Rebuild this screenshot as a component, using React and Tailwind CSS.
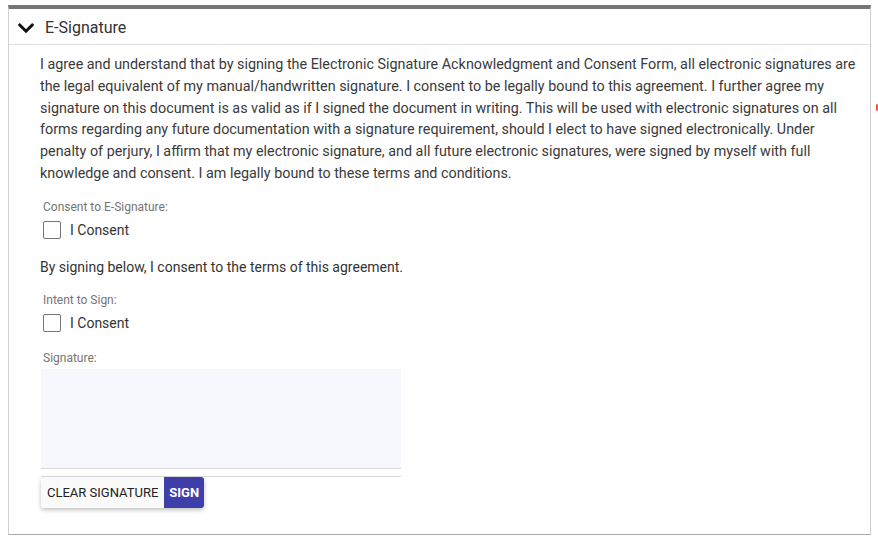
import React from "react";

function Check() {
  return (
    <label className="flex items-center gap-[9px] h-[18px]">
      <span className="w-[18px] h-[18px] border border-[#757575] rounded-[2px] bg-white shrink-0" />
      <span className="text-[14px] text-[#333] leading-[16px]">I Consent</span>
    </label>
  );
}

export default function App() {
  return (
    <div
      className="relative w-[878px] h-[545px] bg-white pl-[8px] pt-[5px] overflow-hidden"
      style={{ fontFamily: "Roboto, 'Liberation Sans', sans-serif" }}
    >
      <div className="w-[863px] h-[530px] border-t-[4px] border-t-[#757575] border-x border-b border-x-[#d0d0d0] border-b-[#aaa] flex flex-col">
        <div className="h-[36px] flex items-center pl-[8px] gap-[10px] border-b border-[#e0e0e0]">
          <svg width="18" height="12" viewBox="0 0 18 12" className="shrink-0 mt-[2px]">
            <path d="M1.8 2 L9 9.2 L16.2 2" fill="none" stroke="#111" strokeWidth="3" />
          </svg>
          <span className="text-[16px] text-[#333] mt-[2px]">E-Signature</span>
        </div>
        <div className="pl-[31px] pr-[8px] pt-[9px]">
          <p className="text-[14.35px] leading-[21.8px] text-[#3a3a3a]">
            I agree and understand that by signing the Electronic Signature Acknowledgment and Consent Form, all electronic signatures are the legal equivalent of my manual/handwritten signature. I consent to be legally bound to this agreement. I further agree my signature on this document is as valid as if I signed the document in writing. This will be used with electronic signatures on all forms regarding any future documentation with a signature requirement, should I elect to have signed electronically. Under penalty of perjury, I affirm that my electronic signature, and all future electronic signatures, were signed by myself with full knowledge and consent. I am legally bound to these terms and conditions.
          </p>
          <div className="pl-[3px] mt-[15px] text-[12px] text-[#757575] leading-[14px]">Consent to E-Signature:</div>
          <div className="pl-[3px] mt-[7px]">
            <Check />
          </div>
          <p className="mt-[20px] text-[14px] text-[#333] leading-[16px]">By signing below, I consent to the terms of this agreement.</p>
          <div className="pl-[3px] mt-[18px] text-[12px] text-[#757575] leading-[14px]">Intent to Sign:</div>
          <div className="pl-[3px] mt-[7px]">
            <Check />
          </div>
          <div className="pl-[3px] mt-[19px] text-[12px] text-[#757575] leading-[14px]">Signature:</div>
          <div className="ml-[1px] mt-[4px] w-[360px]">
            <div className="h-[100px] bg-[#f7f8fd] border-b border-[#dcdcdc]" />
            <div className="mt-[7px] border-t border-[#dcdcdc]" />
            <div className="flex shadow-[0_2px_4px_rgba(0,0,0,0.25)] w-fit rounded-[3px]">
              <button className="h-[31px] px-[6px] bg-[#fafafa] text-[13px] text-[#222] rounded-l-[3px]">CLEAR SIGNATURE</button>
              <button className="h-[31px] px-[5px] bg-[#3f3faa] text-[13px] font-bold text-white rounded-r-[3px]">SIGN</button>
            </div>
          </div>
        </div>
      </div>
      <div className="absolute left-[876px] top-[104px] w-[2px] h-[7px] bg-[#f25a4a] rounded-[1px]" />
    </div>
  );
}
